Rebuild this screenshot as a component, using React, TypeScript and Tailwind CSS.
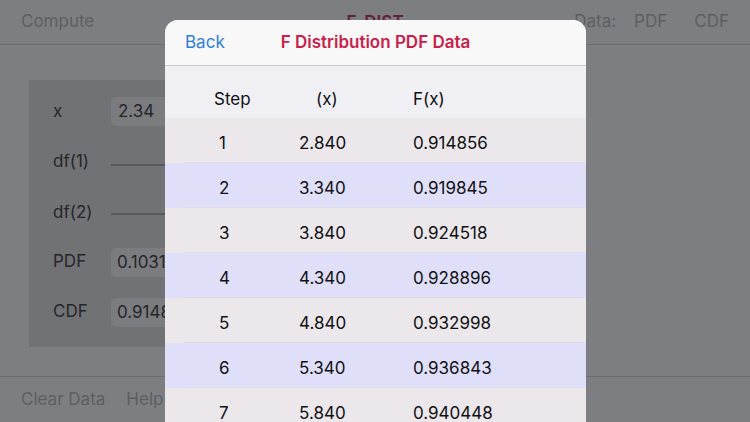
import React from "react";

const rows = [
  ["1", "2.840", "0.914856"],
  ["2", "3.340", "0.919845"],
  ["3", "3.840", "0.924518"],
  ["4", "4.340", "0.928896"],
  ["5", "4.840", "0.932998"],
  ["6", "5.340", "0.936843"],
  ["7", "5.840", "0.940448"],
];

export default function App() {
  return (
    <div
      className="relative w-[750px] h-[422px] overflow-hidden bg-[#7d7e82] flex flex-col"
      style={{ fontFamily: "Inter, 'Noto Sans', sans-serif" }}
    >
      {/* Nav bar */}
      <div className="h-[45px] border-b border-[#6c6d71] flex items-center px-[21px] text-[17px] text-[#5d5e62] shrink-0">
        <span className="w-[200px]">Compute</span>
        <span className="flex-1 text-center font-semibold text-[#62203a] pt-[1px]">F_DIST</span>
        <div className="w-[200px] flex justify-end">
          <span>Data:</span>
          <span className="ml-[18px]">PDF</span>
          <span className="ml-[27px]">CDF</span>
        </div>
      </div>

      {/* content */}
      <div className="flex-1 pl-[29px] pt-[35px]">
        <div className="w-[220px] h-[267px] bg-[#717276] pl-[24px] pt-[17px] flex flex-col text-[17px] text-[#262628]">
          <div className="flex items-center h-[29px]">
            <span className="w-[58px]">x</span>
            <div className="flex-1 h-[29px] rounded-[5px] bg-[#7b7c80] pl-[7px] flex items-center">2.34</div>
          </div>
          <div className="flex items-center h-[29px] mt-[21px]">
            <span className="w-[58px]">df(1)</span>
            <div className="flex-1 h-[2px] bg-[#58595c] mt-[6px]" />
          </div>
          <div className="flex items-center h-[29px] mt-[22px]">
            <span className="w-[58px]">df(2)</span>
            <div className="flex-1 h-[2px] bg-[#58595c] mt-[3px]" />
          </div>
          <div className="flex items-center h-[29px] mt-[21px]">
            <span className="w-[58px] -mt-[2px]">PDF</span>
            <div className="flex-1 h-[29px] rounded-[5px] bg-[#7b7c80] pl-[6px] flex items-center">0.1031</div>
          </div>
          <div className="flex items-center h-[29px] mt-[21px]">
            <span className="w-[58px] -mt-[2px]">CDF</span>
            <div className="flex-1 h-[29px] rounded-[5px] bg-[#7b7c80] pl-[6px] flex items-center">0.9148</div>
          </div>
        </div>
      </div>

      {/* bottom toolbar */}
      <div className="h-[46px] border-t border-[#6c6d71] flex items-center px-[21px] gap-[21px] text-[17px] text-[#5d5e62] shrink-0">
        <span>Clear Data</span>
        <span>Help</span>
      </div>

      {/* Modal */}
      <div className="absolute left-[165px] top-[20px] w-[421px] bottom-0 rounded-t-[13px] overflow-hidden bg-[#efeff4] flex flex-col">
        <div className="h-[46px] bg-[#f8f8f9] border-b border-[#cbcbcf] flex items-center relative shrink-0">
          <span className="pl-[20px] text-[17px] text-[#2f7de1]">Back</span>
          <span className="absolute left-0 right-0 text-center text-[17px] font-semibold text-[#c81f4b] pointer-events-none">
            F Distribution PDF Data
          </span>
        </div>
        <div className="h-[52px] flex items-center pt-[16px] text-[17px] text-[#111113] shrink-0">
          <span className="w-[151px] pl-[49px]">Step</span>
          <span className="w-[97px]">(x)</span>
          <span>F(x)</span>
        </div>
        {rows.map((r, i) => (
          <div key={i} className={`pl-[19px] shrink-0 ${i % 2 === 0 ? "bg-[#ebe7eb]" : "bg-[#e0dffa]"}`}>
            <div className="h-[45px] border-b border-[#dedce4] flex items-center pt-[7px] text-[17px] text-[#111113]">
              <span className="w-[115px] pl-[35px]">{r[0]}</span>
              <span className="w-[114px]">{r[1]}</span>
              <span>{r[2]}</span>
            </div>
          </div>
        ))}
      </div>
    </div>
  );
}
